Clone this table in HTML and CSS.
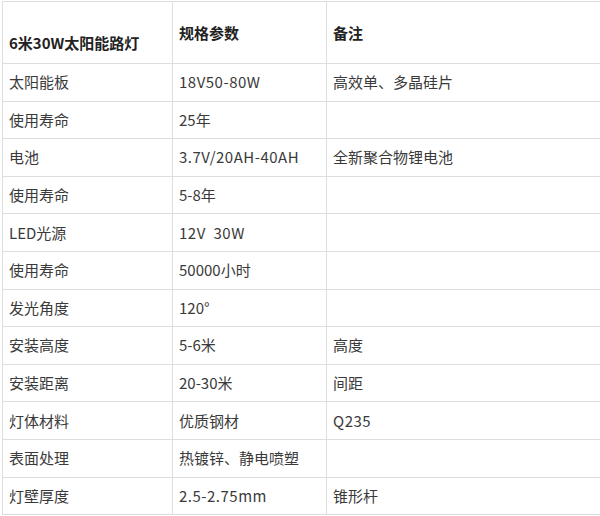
FILE: index.html
```html
<!DOCTYPE html>
<html>
<head>
<meta charset="utf-8">
<link rel="stylesheet" href="styles.css">
</head>
<body>
<table class="spec">
  <colgroup>
    <col class="c1"><col class="c2"><col class="c3">
  </colgroup>
  <tr class="head">
    <th class="first"><span class="lower">6米30W太阳能路灯</span></th>
    <th>规格参数</th>
    <th>备注</th>
  </tr>
  <tr><td>太阳能板</td><td class="lat">18V50-80W</td><td>高效单、多晶硅片</td></tr>
  <tr><td>使用寿命</td><td>25年</td><td></td></tr>
  <tr><td>电池</td><td class="lat">3.7V/20AH-40AH</td><td>全新聚合物锂电池</td></tr>
  <tr><td>使用寿命</td><td>5-8年</td><td></td></tr>
  <tr><td>LED光源</td><td class="lat">12V&nbsp; 30W</td><td></td></tr>
  <tr><td>使用寿命</td><td>50000小时</td><td></td></tr>
  <tr><td>发光角度</td><td>120°</td><td></td></tr>
  <tr><td>安装高度</td><td>5-6米</td><td>高度</td></tr>
  <tr><td>安装距离</td><td>20-30米</td><td>间距</td></tr>
  <tr><td>灯体材料</td><td>优质钢材</td><td class="lat">Q235</td></tr>
  <tr><td>表面处理</td><td>热镀锌、静电喷塑</td><td></td></tr>
  <tr><td>灯壁厚度</td><td class="lat">2.5-2.75mm</td><td class="low">锥形杆</td></tr>
</table>
</body>
</html>
```
FILE: styles.css
```css
html, body {
  margin: 0;
  padding: 0;
  background: #fff;
  overflow: hidden;
}
.spec {
  border-collapse: collapse;
  margin: 1px 0 0 2px;
  width: 599px;
  table-layout: fixed;
  font-family: "Noto Sans CJK SC", "Noto Sans", sans-serif;
  font-size: 15px;
  color: #3a3a3a;
}
.c1 { width: 170px; }
.c2 { width: 154px; }
.c3 { width: 275px; }
.spec th, .spec td {
  border: 1px solid #dedede;
  text-align: left;
  padding: 0 0 0 6px;
  vertical-align: middle;
  line-height: 20px;
}
.spec th {
  font-weight: bold;
  color: #222;
}
.spec tr { height: 37.6px; }
.spec .head { height: 62px; }
.lower {
  display: block;
  padding-top: 20px;
}
.lat { letter-spacing: 0.5px; }
.low { padding-top: 6px; }
```
